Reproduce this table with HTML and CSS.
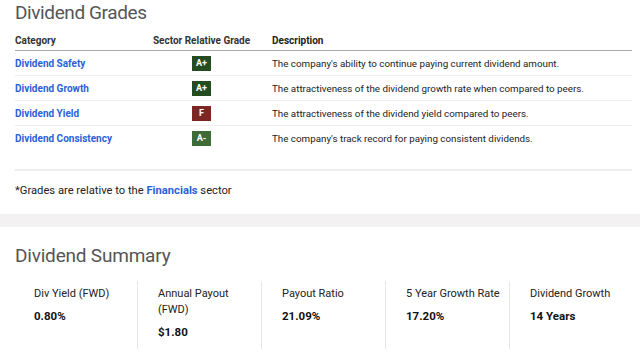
FILE: index.html
```html
<!DOCTYPE html>
<html lang="en">
<head>
<meta charset="utf-8">
<title>Dividend Grades</title>
<link rel="stylesheet" href="styles.css">
</head>
<body>
<section class="grades">
  <h2 class="title">Dividend Grades</h2>
  <div class="table">
    <div class="row head">
      <div class="cell">Category</div>
      <div class="cell grade">Sector Relative Grade</div>
      <div class="cell desc">Description</div>
    </div>
    <div class="row">
      <div class="cell"><a class="link" href="#">Dividend Safety</a></div>
      <div class="cell grade"><span class="badge a-plus">A+</span></div>
      <div class="cell desc">The company's ability to continue paying current dividend amount.</div>
    </div>
    <div class="row">
      <div class="cell"><a class="link" href="#">Dividend Growth</a></div>
      <div class="cell grade"><span class="badge a-plus">A+</span></div>
      <div class="cell desc">The attractiveness of the dividend growth rate when compared to peers.</div>
    </div>
    <div class="row">
      <div class="cell"><a class="link" href="#">Dividend Yield</a></div>
      <div class="cell grade"><span class="badge f">F</span></div>
      <div class="cell desc">The attractiveness of the dividend yield compared to peers.</div>
    </div>
    <div class="row last">
      <div class="cell"><a class="link" href="#">Dividend Consistency</a></div>
      <div class="cell grade"><span class="badge a-minus">A-</span></div>
      <div class="cell desc">The company's track record for paying consistent dividends.</div>
    </div>
  </div>
  <p class="note">*Grades are relative to the <a class="note-link" href="#">Financials</a> sector</p>
</section>
<div class="band"></div>
<section class="summary">
  <h2 class="title">Dividend Summary</h2>
  <div class="cards">
    <div class="card">
      <div class="label">Div Yield (FWD)</div>
      <div class="value">0.80%</div>
    </div>
    <div class="card">
      <div class="label">Annual Payout<br>(FWD)</div>
      <div class="value">$1.80</div>
    </div>
    <div class="card">
      <div class="label">Payout Ratio</div>
      <div class="value">21.09%</div>
    </div>
    <div class="card">
      <div class="label">5 Year Growth Rate</div>
      <div class="value">17.20%</div>
    </div>
    <div class="card">
      <div class="label">Dividend Growth</div>
      <div class="value">14 Years</div>
    </div>
  </div>
</section>
</body>
</html>
```
FILE: styles.css
```css
* { box-sizing: border-box; }
html, body { margin: 0; padding: 0; background: #fff; }
body {
  font-family: Roboto, "Liberation Sans", sans-serif;
  color: #222;
  width: 640px;
}
.grades { padding: 0 8px 0 15px; }
.title {
  margin: 0;
  font-size: 19px;
  font-weight: 400;
  line-height: 26px;
  color: #555;
  letter-spacing: -0.4px;
}
.table {
  margin-top: 4px;
  padding-bottom: 18px;
  border-bottom: 2px solid #ececec;
}
.row {
  display: grid;
  grid-template-columns: 127px 119px 1fr;
  height: 25px;
  align-items: center;
  border-bottom: 1px solid #ededed;
  font-size: 10px;
}
.row.head {
  height: 21px;
  border-bottom: 1px solid #a9a9a9;
  font-weight: 700;
  color: #333;
}
.row.last { border-bottom: none; }
.cell.grade { text-align: center; }
.cell.desc { padding-left: 11px; color: #222; font-size: 9.8px; }
.row.head .cell.desc { font-size: 10px; }
.link {
  color: #2b5fd9;
  font-weight: 700;
  text-decoration: none;
}
.badge {
  display: inline-block;
  width: 19px;
  height: 15px;
  line-height: 15px;
  font-size: 9px;
  font-weight: 700;
  color: #fff;
  text-align: center;
  vertical-align: middle;
}
.a-plus { background: #254b21; }
.f { background: #7d2724; }
.a-minus { background: #3e6b37; }
.note {
  margin: 0;
  height: 43px;
  line-height: 40px;
  font-size: 11.2px;
  color: #222;
}
.note-link {
  color: #2b5fd9;
  font-weight: 700;
  text-decoration: none;
}
.band { height: 13px; background: #f3f1f1; }
.summary { padding: 16px 7px 0 13px; }
.summary .title { padding-left: 2px; letter-spacing: -0.2px; }
.cards {
  display: grid;
  grid-template-columns: repeat(5, 124px);
  margin-top: 12px;
}
.card {
  height: 68px;
  padding: 5px 4px 0 20px;
  border-left: 1px solid #e6e6e6;
}
.card:first-child { border-left-color: transparent; }
.label {
  font-size: 11px;
  line-height: 16px;
  color: #222;
  white-space: nowrap;
}
.value {
  margin-top: 6px;
  font-size: 11.5px;
  line-height: 16px;
  font-weight: 700;
  color: #111;
}
```
